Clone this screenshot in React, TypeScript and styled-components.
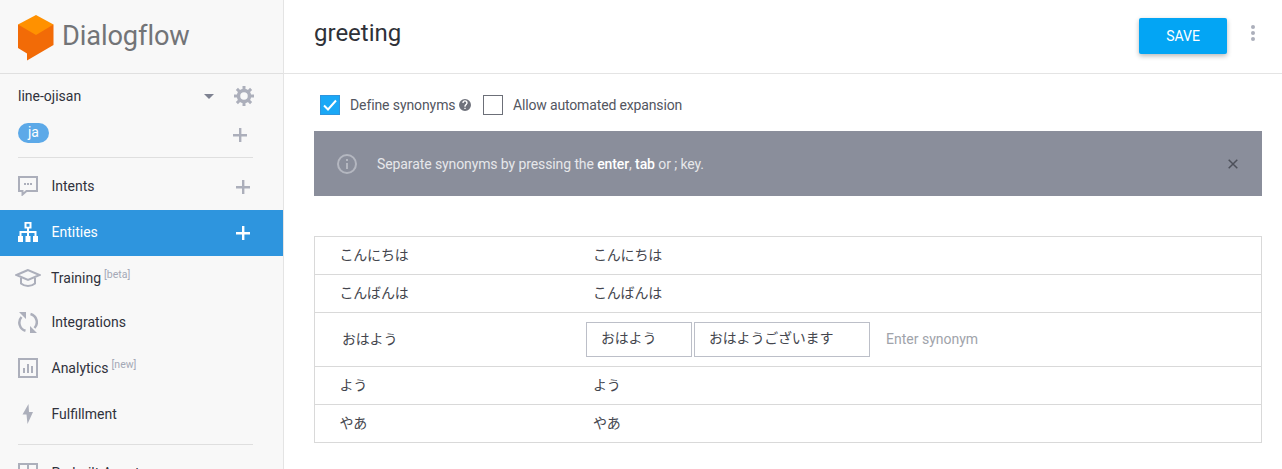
import styled, { createGlobalStyle } from 'styled-components'

const GlobalStyle = createGlobalStyle`
  html, body {
    margin: 0;
    height: 469px;
    overflow: hidden;
    background: #fff;
    font-family: Roboto, "Noto Sans CJK JP", sans-serif;
  }
  * { box-sizing: border-box; }
`

const Page = styled.div`
  display: flex;
  width: 1282px;
  height: 469px;
  overflow: hidden;
`

const Sidebar = styled.aside`
  flex: 0 0 284px;
  height: 469px;
  overflow: hidden;
  background: #f8f8f8;
  border-right: 1px solid #e4e4e4;
  color: #30323c;
`

const LogoBar = styled.div`
  display: flex;
  align-items: center;
  gap: 8px;
  height: 74px;
  padding: 2px 0 0 18px;
  border-bottom: 1px solid #e0e0e0;
`

const LogoText = styled.span`
  margin-bottom: 3px;
  font-size: 27.2px;
  color: #727477;
  letter-spacing: -0.1px;
`

const ProjectRow = styled.div`
  display: flex;
  align-items: center;
  height: 44px;
  padding: 0 29px 0 18px;
  font-size: 14px;
`

const ProjectName = styled.span`
  flex: 1;
`

const Caret = styled.span`
  width: 0;
  height: 0;
  margin-right: 20px;
  border-left: 5px solid transparent;
  border-right: 5px solid transparent;
  border-top: 5px solid #7e8291;
`

const LangRow = styled.div`
  display: flex;
  align-items: center;
  justify-content: space-between;
  height: 30px;
  margin: 0 30px 0 18px;
  padding-right: 6px;

  svg {
    margin-top: 4px;
  }
`

const LangPill = styled.span`
  display: block;
  width: 31px;
  height: 20px;
  border-radius: 10px;
  background: #5ca9e8;
  color: #fff;
  font-size: 14px;
  line-height: 19px;
  text-align: center;
`

const Divider = styled.div<{ $top: number; $bottom: number }>`
  height: 1px;
  margin: ${(p) => p.$top}px 30px ${(p) => p.$bottom}px 18px;
  background: #dfdfdf;
`

const NavRow = styled.div<{ $active?: boolean; $height?: number; $flat?: boolean }>`
  display: flex;
  align-items: center;
  height: ${(p) => p.$height ?? 46}px;
  padding: 0 33px ${(p) => (p.$flat ? 0 : 2)}px 18px;
  background: ${(p) => (p.$active ? '#2e95de' : 'transparent')};
  color: ${(p) => (p.$active ? '#fff' : '#30323c')};
  font-size: 14px;

  > svg {
    margin-top: 2px;
  }
`

const NavIcon = styled.span<{ $shift?: number }>`
  display: flex;
  flex: 0 0 ${(p) => 33.5 + (p.$shift ?? 0)}px;
  margin-left: ${(p) => -(p.$shift ?? 0)}px;
`

const NavLabel = styled.span<{ $nudge?: number }>`
  flex: 1;
  margin-left: ${(p) => p.$nudge ?? 0}px;
`

const Tag = styled.sup`
  margin-left: 3px;
  font-size: 10.5px;
  line-height: 0;
  vertical-align: 5px;
  color: #a4a8b6;
`

const Main = styled.main`
  flex: 1;
  min-width: 0;
`

const Header = styled.header`
  display: flex;
  align-items: flex-start;
  height: 74px;
  padding: 18px 27px 0 30px;
  border-bottom: 1px solid #e4e4e4;
`

const Title = styled.h1`
  flex: 1;
  margin: 0;
  font-size: 24px;
  font-weight: 400;
  line-height: 30px;
  color: #2f3138;
`

const SaveButton = styled.button`
  width: 88px;
  height: 36px;
  padding: 0;
  border: 0;
  border-radius: 2px;
  background: #03a5f4;
  box-shadow: 0 2px 5px rgba(0, 0, 0, 0.28);
  color: #fff;
  font: 400 14px Roboto, sans-serif;
`

const MoreDots = styled.div`
  display: flex;
  flex-direction: column;
  gap: 2px;
  margin: 7px 0 0 24px;
  width: 4px;

  span {
    width: 4px;
    height: 4px;
    border-radius: 50%;
    background: #acafbb;
  }
`

const Content = styled.div`
  padding: 21px 20px 0 30px;
`

const OptionRow = styled.div`
  display: flex;
  align-items: center;
  height: 20px;
  padding-left: 6px;
  font-size: 14px;
  letter-spacing: -0.1px;
  color: #53565f;
`

const Check = styled.span<{ $checked?: boolean }>`
  display: flex;
  align-items: center;
  justify-content: center;
  width: 20px;
  height: 20px;
  margin-right: 10px;
  border: 1px solid ${(p) => (p.$checked ? '#2e95de' : '#6c6f78')};
  background: ${(p) => (p.$checked ? '#1aa8f6' : '#fff')};
`

const HelpIcon = styled.svg`
  margin: 0 11.5px 0 4px;
`

const ExpansionLabel = styled.span`
  letter-spacing: -0.15px;
`

const Alert = styled.div`
  display: flex;
  align-items: center;
  height: 65px;
  padding: 0 24px 0 23px;
  margin-top: 16px;
  background: #8a8e9b;
  color: #e6e7ea;
  font-size: 14px;
  letter-spacing: -0.1px;
`

const AlertText = styled.span`
  flex: 1;
  margin-left: 20px;

  b {
    font-weight: 500;
    color: #fff;
  }
`

const Table = styled.div`
  margin-top: 40px;
  border: 1px solid #d9d9d9;
  border-bottom: 0;
`

const Row = styled.div<{ $editing?: boolean }>`
  display: flex;
  align-items: center;
  height: ${(p) => (p.$editing ? 54 : 38)}px;
  padding-bottom: 4px;
  border-bottom: 1px solid #d9d9d9;
  font-size: 14px;
  letter-spacing: -0.2px;
  color: #44464e;
`

const ValueCell = styled.div<{ $editing?: boolean }>`
  flex: 0 0 ${(p) => (p.$editing ? 271 : 278)}px;
  padding-left: ${(p) => (p.$editing ? 27 : 24.5)}px;
`

const SynonymCell = styled.div`
  display: flex;
  align-items: center;
  gap: 2px;
  margin-top: 4px;
`

const Chip = styled.span<{ $width: number }>`
  display: block;
  width: ${(p) => p.$width}px;
  height: 35px;
  padding-left: 14px;
  border: 1px solid #bcbfc8;
  line-height: 31px;
`

const Placeholder = styled.span`
  margin: 0 0 2px 14px;
  letter-spacing: 0;
  color: #a0a3aa;
`

const IconPlus = ({ color = '#acafbb' }: { color?: string }) => (
  <svg width="14" height="14" viewBox="0 0 14 14">
    <path d="M6 0h2.400v6H14v2.400H8.400V14H6V8.400H0V6h6z" fill={color} />
  </svg>
)

const IconGear = () => (
  <svg width="20" height="20" viewBox="0 0 20 20" fill="none" stroke="#acafbb">
    <circle cx="10" cy="10" r="5.500" strokeWidth="3.500" />
    <path
      d="M10 0v4M10 16v4M0 10h4M16 10h4M2.900 2.900l2.800 2.800M14.300 14.300l2.800 2.800M17.100 2.900l-2.800 2.800M5.700 14.300l-2.800 2.800"
      strokeWidth="3"
    />
  </svg>
)

const IconIntents = () => (
  <svg width="20" height="20" viewBox="0 0 20 20" fill="none">
    <path d="M1 1h18v14H8.500l-4 3.500V15H1z" stroke="#acafbb" strokeWidth="2" />
    <path d="M6 7h2v2H6zM9 7h2v2H9zM12 7h2v2h-2z" fill="#acafbb" />
  </svg>
)

const IconEntities = () => (
  <svg width="20" height="20" viewBox="0 0 20 20" fill="#fff">
    <path d="M6.500 0h7v6.500H11V9h7.500v5H20v6h-5v-6h1.500v-3H11v3h1.500v6h-5v-6H9v-3H3.500v3H5v6H0v-6h1.500V9H9V6.500H6.500zm2 1.800v2.900h3V1.800z" />
  </svg>
)

const IconTraining = () => (
  <svg width="26" height="20" viewBox="0 0 26 20" fill="none" stroke="#acafbb" strokeWidth="2">
    <path d="M13 2 1.500 7 13 12l11.500-5z" />
    <path d="M6 10v5.500c4 3.300 10 3.300 14 0V10" />
  </svg>
)

const IconIntegrations = () => (
  <svg width="20" height="21" viewBox="0 0 20 21" fill="none">
    <path d="M7.500 18.800A8.500 8.500 0 0 1 3.500 5M12.500 2A8.500 8.500 0 0 1 16.500 16" stroke="#acafbb" strokeWidth="2.500" />
    <path d="M1 0h7v7zM19 21h-7v-7z" fill="#acafbb" />
  </svg>
)

const IconAnalytics = () => (
  <svg width="20" height="20" viewBox="0 0 20 20" fill="none">
    <rect x="1" y="1" width="18" height="18" stroke="#acafbb" strokeWidth="2" />
    <path d="M5 10h2v5H5zM9 6h2v9H9zM13 8h2v7h-2z" fill="#acafbb" />
  </svg>
)

const IconBolt = () => (
  <svg width="20" height="20" viewBox="-4 0 20 20">
    <path d="M6.500 0 0.500 10.500 H4.500 L5.500 20 L11 8 H7z" fill="#acafbb" />
  </svg>
)

const IconPrebuilt = () => (
  <svg width="20" height="20" viewBox="0 0 20 20" fill="none" stroke="#acafbb" strokeWidth="2">
    <path d="M1 1h18v18H1zM10 1v9M1 10h18" />
  </svg>
)

const Logo = () => (
  <svg width="36" height="46" viewBox="0 0 36 46">
    <path d="M0 9.500V33l9 5.500v7L35.500 30V9.500z" fill="#f26b07" />
    <path d="M18 0 35.500 9.500 18 20 0 9.500z" fill="#ff9100" />
  </svg>
)

const rows = [
  { value: 'こんにちは', synonym: 'こんにちは' },
  { value: 'こんばんは', synonym: 'こんばんは' },
  { value: 'おはよう', chips: [{ text: 'おはよう', width: 106 }, { text: 'おはようございます', width: 176 }] },
  { value: 'よう', synonym: 'よう' },
  { value: 'やあ', synonym: 'やあ' },
]

export default function App() {
  return (
    <Page>
      <GlobalStyle />
      <Sidebar>
        <LogoBar>
          <Logo />
          <LogoText>Dialogflow</LogoText>
        </LogoBar>
        <ProjectRow>
          <ProjectName>line-ojisan</ProjectName>
          <Caret />
          <IconGear />
        </ProjectRow>
        <LangRow>
          <LangPill>ja</LangPill>
          <IconPlus />
        </LangRow>
        <Divider $top={9} $bottom={6} />
        <NavRow>
          <NavIcon><IconIntents /></NavIcon>
          <NavLabel>Intents</NavLabel>
          <IconPlus />
        </NavRow>
        <NavRow $active>
          <NavIcon><IconEntities /></NavIcon>
          <NavLabel>Entities</NavLabel>
          <IconPlus color="#fff" />
        </NavRow>
        <NavRow $height={44} $flat>
          <NavIcon $shift={3}><IconTraining /></NavIcon>
          <NavLabel $nudge={-0.5}>Training<Tag>[beta]</Tag></NavLabel>
        </NavRow>
        <NavRow>
          <NavIcon><IconIntegrations /></NavIcon>
          <NavLabel>Integrations</NavLabel>
        </NavRow>
        <NavRow>
          <NavIcon><IconAnalytics /></NavIcon>
          <NavLabel>Analytics<Tag>[new]</Tag></NavLabel>
        </NavRow>
        <NavRow>
          <NavIcon><IconBolt /></NavIcon>
          <NavLabel>Fulfillment</NavLabel>
        </NavRow>
        <Divider $top={6} $bottom={6} />
        <NavRow>
          <NavIcon><IconPrebuilt /></NavIcon>
          <NavLabel>Prebuilt Agents</NavLabel>
        </NavRow>
      </Sidebar>
      <Main>
        <Header>
          <Title>greeting</Title>
          <SaveButton>SAVE</SaveButton>
          <MoreDots><span /><span /><span /></MoreDots>
        </Header>
        <Content>
          <OptionRow>
            <Check $checked>
              <svg width="14" height="12" viewBox="0 0 14 12" fill="none">
                <path d="M1 6.500 5 10.500 13 1.500" stroke="#fff" strokeWidth="2" />
              </svg>
            </Check>
            Define synonyms
            <HelpIcon width="12" height="12" viewBox="0 0 24 24" fill="#6f727c">
              <path d="M12 0a12 12 0 1 0 0 24 12 12 0 0 0 0-24zm1.300 20h-2.600v-2.600h2.600zm2.600-8.700-1.200 1.200c-1 .9-1.400 1.700-1.400 3h-2.600v-.6c0-1.400.6-2.700 1.500-3.700l1.600-1.600c.5-.5.700-1.100.7-1.800a2.600 2.600 0 0 0-5.200 0H6.700a5.300 5.300 0 0 1 10.600 0c0 1-.5 2-1.400 2.500z" />
            </HelpIcon>
            <Check />
            <ExpansionLabel>Allow automated expansion</ExpansionLabel>
          </OptionRow>
          <Alert>
            <svg width="20" height="20" viewBox="0 0 20 20" fill="none">
              <circle cx="10" cy="10" r="9" stroke="#b4b7c0" strokeWidth="2" />
              <path d="M9 5h2v2H9zM9 9h2v6H9z" fill="#b4b7c0" />
            </svg>
            <AlertText>
              Separate synonyms by pressing the <b>enter</b>, <b>tab</b> or ; key.
            </AlertText>
            <svg width="10" height="10" viewBox="0 0 10 10" fill="none">
              <path d="M.7.7l8.600 8.600M9.300.7.7 9.300" stroke="#4d505a" strokeWidth="1.500" />
            </svg>
          </Alert>
          <Table>
            {rows.map((row) => (
              <Row key={row.value} $editing={!!row.chips}>
                <ValueCell $editing={!!row.chips}>{row.value}</ValueCell>
                {row.chips ? (
                  <SynonymCell>
                    {row.chips.map((chip) => (
                      <Chip key={chip.text} $width={chip.width}>{chip.text}</Chip>
                    ))}
                    <Placeholder>Enter synonym</Placeholder>
                  </SynonymCell>
                ) : (
                  <span>{row.synonym}</span>
                )}
              </Row>
            ))}
          </Table>
        </Content>
      </Main>
    </Page>
  )
}
